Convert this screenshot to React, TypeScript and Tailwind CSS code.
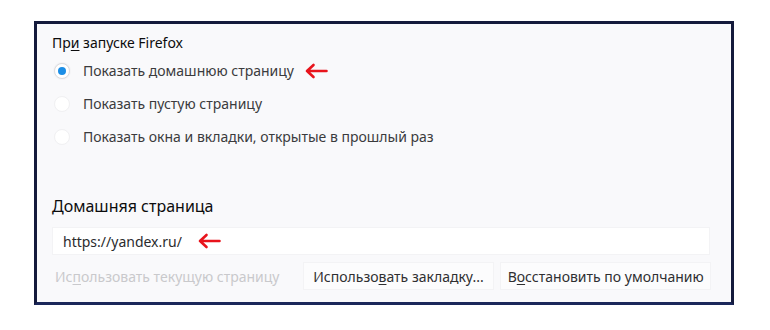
import type { ReactNode } from "react";

function Arrow({ gap = "ml-[10px]" }: { gap?: string }) {
  return (
    <svg width="24" height="16" viewBox="0 0 24 16" className={gap + " shrink-0"}>
      <path d="M22.5 8H3M9.5 2 3 8l6.5 6" fill="none" stroke="#e8141c" strokeWidth="2.6" strokeLinecap="round" strokeLinejoin="round" />
    </svg>
  );
}

function Radio({ checked, children }: { checked?: boolean; children: ReactNode }) {
  return (
    <div className="flex h-[33px] items-center">
      <span
        className={
          checked
            ? "flex h-[16px] w-[16px] items-center justify-center rounded-full border border-[#dcdce0] bg-white shadow-[0_0_2px_rgba(0,0,0,0.08)]"
            : "h-[16px] w-[16px] rounded-full border border-[#f0f0f2] bg-white"
        }
      >
        {checked && <span className="h-[8px] w-[8px] rounded-full bg-[#1c8ee6]" />}
      </span>
      <span className="ml-[13px] text-[14px] text-[#3b3b3d]">{children}</span>
    </div>
  );
}

export default function App() {
  return (
    <div className="h-[330px] w-[770px] bg-white pl-[34px] pt-[21px] font-['Noto_Sans',sans-serif]">
      <div className="h-[284px] w-[700px] border-[3px] border-[#141a3c] border-b-[#1b275a] bg-[#f9f9fb] pl-[15px] pr-[20px]">
        <div className="pt-[9px] text-[14px] leading-[20px] text-[#0c0c0d]">
          Пр<span className="underline underline-offset-2">и</span> запуске Firefox
        </div>
        <div className="mt-[1px] pl-[2px]">
          <Radio checked>
            <span className="flex items-center">
              Показать домашнюю страницу
              <Arrow />
            </span>
          </Radio>
          <Radio>Показать пустую страницу</Radio>
          <Radio>Показать окна и вкладки, открытые в прошлый раз</Radio>
        </div>
        <div className="mt-[42px] text-[16px] leading-[22px] text-[#0c0c0d]">Домашняя страница</div>
        <div className="mt-[10px] flex h-[28px] w-[658px] items-center border border-[#f3f3f5] bg-white pl-[10px] text-[14px] text-[#2b2b2d]">
          https://yandex.ru/
          <Arrow gap="ml-[15px]" />
        </div>
        <div className="mt-[7px] flex h-[28px] gap-[6px] text-[14px]">
          <div className="flex w-[245px] items-center pl-[3px] text-[#c9c9cc]">
            Ис<span className="underline underline-offset-2">п</span>ользовать текущую страницу
          </div>
          <div className="flex w-[192px] items-center justify-center border border-[#f3f3f5] bg-[#fcfcfd] text-[#2f2f31]">
            Использо<span className="underline underline-offset-2">в</span>ать закладку...
          </div>
          <div className="flex w-[211px] items-center justify-center border border-[#f3f3f5] bg-[#fcfcfd] text-[#2f2f31]">
            В<span className="underline underline-offset-2">о</span>сстановить по умолчанию
          </div>
        </div>
      </div>
    </div>
  );
}
